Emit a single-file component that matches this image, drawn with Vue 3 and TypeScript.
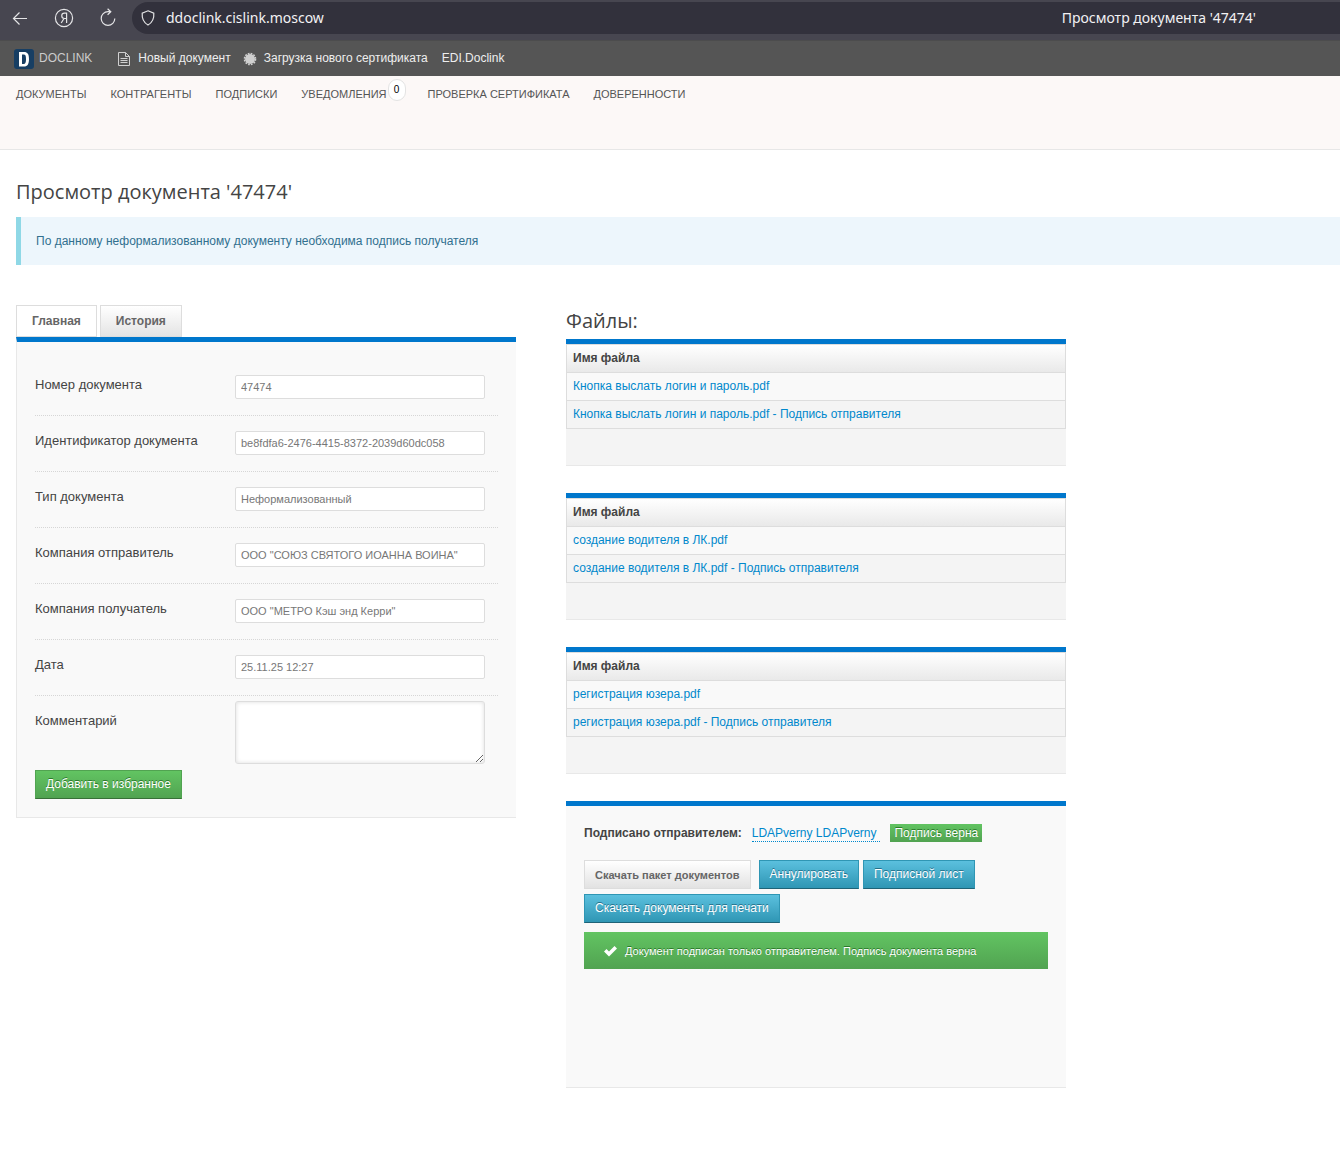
<script setup lang="ts">
import { ref } from 'vue'

interface Field {
  id: string
  label: string
  value: string
}

const title = "Просмотр документа '47474'"

const sections: { label: string; count?: number }[] = [
  { label: 'Документы' },
  { label: 'Контрагенты' },
  { label: 'Подписки' },
  { label: 'Уведомления', count: 0 },
  { label: 'Проверка сертификата' },
  { label: 'Доверенности' },
]

const fields: Field[] = [
  { id: 'number', label: 'Номер документа', value: '47474' },
  { id: 'uuid', label: 'Идентификатор документа', value: 'be8fdfa6-2476-4415-8372-2039d60dc058' },
  { id: 'type', label: 'Тип документа', value: 'Неформализованный' },
  { id: 'sender', label: 'Компания отправитель', value: 'ООО "СОЮЗ СВЯТОГО ИОАННА ВОИНА"' },
  { id: 'receiver', label: 'Компания получатель', value: 'ООО "МЕТРО Кэш энд Керри"' },
  { id: 'date', label: 'Дата', value: '25.11.25 12:27' },
]

const files: string[] = [
  'Кнопка выслать логин и пароль.pdf',
  'создание водителя в ЛК.pdf',
  'регистрация юзера.pdf',
]

const comment = ref('')
</script>

<template>
  <div class="page">
    <div class="browser">
      <div class="browser-buttons">
        <button type="button" aria-label="Назад">
          <svg width="20" height="20" viewBox="0 0 20 20"><path d="M17 10.500H3.500M9.500 4.500l-6 6 6 6" /></svg>
        </button>
        <button type="button" aria-label="Яндекс">
          <svg width="20" height="20" viewBox="0 0 20 20"><circle cx="10" cy="10" r="8.600" /><path d="M12.600 15V5.200h-2.200a2.600 2.600 0 0 0 0 5.300h2.200M10 10.500L7.200 15" /></svg>
        </button>
        <button type="button" aria-label="Обновить">
          <svg width="20" height="20" viewBox="0 0 20 20"><path d="M16.800 10.500a6.800 6.800 0 1 1-6.800-6.800h2.500M9.600 0.800l3.200 2.900-3.200 3" /></svg>
        </button>
      </div>
      <div class="address">
        <svg width="16" height="18" viewBox="0 0 16 18"><path d="M8 1.800l5.800 2.300c.4 4.800-.8 9-5.800 11.900C3 13.100 1.800 8.900 2.200 4.100z" /></svg>
        <span class="host">ddoclink.cislink.moscow</span>
        <span class="tab-title">{{ title }}</span>
      </div>
    </div>

    <header class="topbar">
      <a href="#" class="brand">
        <svg width="20" height="20" viewBox="0 0 20 20">
          <rect width="20" height="20" rx="3" fill="#173e63" />
          <path d="M5 3h5c3.500 0 5 2 5 7s-1.500 7.500-5 7.500H5zM8 5.500v9.500h1.500c1.700 0 2.500-1.200 2.500-5s-.8-4.500-2.500-4.500z" fill="#fff" fill-rule="evenodd" />
        </svg>
        <span>DOCLINK</span>
      </a>
      <a href="#" class="new-doc">
        <svg width="14" height="14" viewBox="0 0 14 14" fill="none" stroke="#d0d0d0">
          <path d="M1.500.5h7l4 4v9h-11zM8.500.5v4h4M3.500 6.500h7M3.500 8.500h7M3.500 10.500h7" />
        </svg>
        <span>Новый документ</span>
      </a>
      <a href="#" class="upload">
        <svg width="14" height="14" viewBox="0 0 14 14">
          <circle cx="7" cy="7" r="5" fill="#cfcfcf" />
          <circle cx="7" cy="7" r="5.500" fill="none" stroke="#cfcfcf" stroke-width="1.600" stroke-dasharray="1.730 1.150" />
        </svg>
        <span>Загрузка нового сертификата</span>
      </a>
      <a href="#" class="edi">EDI.Doclink</a>
    </header>

    <nav class="sections">
      <a v-for="s in sections" :key="s.label" href="#">
        {{ s.label }}<span v-if="s.count !== undefined" class="count">{{ s.count }}</span>
      </a>
    </nav>

    <main>
      <h1>{{ title }}</h1>
      <p class="notice">По данному неформализованному документу необходима подпись получателя</p>

      <div class="columns">
        <section class="column">
          <div class="tabs">
            <button type="button" class="tab active">Главная</button>
            <button type="button" class="tab">История</button>
          </div>
          <form class="panel form" @submit.prevent>
            <div v-for="f in fields" :key="f.id" class="row">
              <label :for="f.id">{{ f.label }}</label>
              <input :id="f.id" type="text" :value="f.value" readonly />
            </div>
            <div class="row comment">
              <label for="comment">Комментарий</label>
              <textarea id="comment" v-model="comment"></textarea>
            </div>
            <button type="submit" class="btn green">Добавить в избранное</button>
          </form>
        </section>

        <section class="column">
          <h2>Файлы:</h2>
          <div v-for="file in files" :key="file" class="files">
            <table>
              <thead>
                <tr><th scope="col">Имя файла</th></tr>
              </thead>
              <tbody>
                <tr><td><a href="#">{{ file }}</a></td></tr>
                <tr><td><a href="#">{{ file }} - Подпись отправителя</a></td></tr>
              </tbody>
            </table>
          </div>

          <div class="panel signature">
            <div class="signer">
              <strong>Подписано отправителем:</strong>
              <a href="#">LDAPverny LDAPverny</a>
              <span class="valid">Подпись верна</span>
            </div>
            <div class="actions">
              <button type="button" class="btn plain">Скачать пакет документов</button>
              <button type="button" class="btn blue">Аннулировать</button>
              <button type="button" class="btn blue">Подписной лист</button>
              <button type="button" class="btn blue">Скачать документы для печати</button>
            </div>
            <div class="status">
              <svg width="14" height="12" viewBox="0 0 14 12"><path d="M0 6.500L2.500 4 5 6.500 10.500 1l2.500 2.500L5 11.500z" fill="#fff" /></svg>
              <span>Документ подписан только отправителем. Подпись документа верна</span>
            </div>
          </div>
        </section>
      </div>
    </main>
  </div>
</template>

<style>
body {
  margin: 0;
  background: #fff;
}
</style>

<style scoped>
.page {
  min-height: 100vh;
  color: #444;
  font: 12px/18px "Liberation Sans", Arial, sans-serif;
}
.page * {
  box-sizing: border-box;
}
a {
  color: #0088cc;
  text-decoration: none;
}
button {
  font-family: inherit;
  cursor: pointer;
}

/* Browser bar */
.browser {
  display: flex;
  height: 40px;
  padding: 2px 0 6px 10px;
  background: #474650;
}
.browser-buttons {
  display: flex;
  align-items: center;
  gap: 24px;
  width: 122px;
}
.browser-buttons button {
  display: flex;
  padding: 0;
  border: 0;
  background: none;
}
.browser svg {
  fill: none;
  stroke: #e4e4e6;
  stroke-width: 1.2;
}
.address {
  display: flex;
  flex: 1;
  align-items: center;
  padding: 0 84px 0 8px;
  border-radius: 16px 0 0 16px;
  background: #32313c;
  color: #f2f2f4;
  font: 14px/32px "Noto Sans", "Open Sans", sans-serif;
}
.host {
  margin-left: 10px;
}
.tab-title {
  margin-left: auto;
}

/* Product bar */
.topbar {
  display: flex;
  align-items: center;
  height: 36px;
  padding-left: 14px;
  border-top: 1px solid #4c4c4d;
  background: #555;
}
.topbar a {
  display: flex;
  align-items: center;
  color: #eee;
}
.topbar span,
.edi {
  padding-bottom: 2px;
}
.topbar .brand {
  gap: 5px;
  color: #ccc;
}
.new-doc {
  gap: 7px;
  margin-left: 25px;
}
.upload {
  gap: 7px;
  margin-left: 12px;
}
.edi {
  margin-left: 14px;
}

/* Section links */
.sections {
  display: flex;
  gap: 24px;
  height: 74px;
  padding: 9px 16px 0;
  border-bottom: 1px solid #e7e7e7;
  background: #fcf8f7;
}
.sections a {
  position: relative;
  color: #555;
  font-size: 11px;
  text-transform: uppercase;
}
.sections a:has(.count) {
  margin-right: 17px;
}
.count {
  position: absolute;
  left: 100%;
  top: -6px;
  width: 18px;
  margin-left: 1px;
  border: 1px solid #e3e3e3;
  border-radius: 9px;
  background: #fff;
  color: #000;
  font-size: 10px;
  line-height: 20px;
  text-align: center;
}

/* Content */
main {
  padding: 30px 0 0 16px;
}
h1,
h2 {
  margin: 0;
  color: #444;
  font: 20px/24px "Open Sans", "Noto Sans", sans-serif;
}
.notice {
  margin: 13px 0 40px;
  padding: 15px;
  border-left: 5px solid #8fd8e6;
  background: #edf6fc;
  color: #31708f;
}
.columns {
  display: flex;
  align-items: flex-start;
  gap: 50px;
}
.column {
  flex: 0 1 500px;
  min-width: 0;
}
.panel {
  border-top: 5px solid #0077cc;
  border-bottom: 1px solid #e8e8e8;
  background: #f9f9f9;
}

.tabs {
  display: flex;
  gap: 3px;
}
.tab {
  height: 32px;
  padding: 0 15px;
  border: 1px solid #ddd;
  background: linear-gradient(#fff, #e4e4e4);
  color: #666;
  font-size: 12px;
  font-weight: bold;
}
.tab.active {
  background: #fff;
}

.form {
  padding: 18px 18px 18px 18px;
  border-left: 1px solid #e8e8e8;
}
.form .row {
  display: flex;
  align-items: flex-start;
  height: 56px;
  border-bottom: 1px dotted #d6d6d6;
}
.row label {
  width: 200px;
  padding-top: 16px;
  font-size: 13px;
}
.row input,
.row textarea {
  width: 250px;
  border: 1px solid #ddd;
  border-radius: 2px;
  background: #fff;
  color: #777;
  font: 11px/16px "Liberation Sans", Arial, sans-serif;
}
.row input {
  height: 24px;
  margin-top: 15px;
  padding: 0 5px;
}
.row textarea {
  height: 63px;
  margin-top: 5px;
  border-radius: 3px;
  box-shadow: inset 0 0 4px #ddd;
}
.form .comment {
  height: 74px;
  border-bottom: 0;
}

.btn {
  height: 29px;
  padding: 0 10px 2px;
  border: 1px solid;
  font-size: 12px;
}
.green {
  border-color: #51a351 #51a351 #387038;
  background: linear-gradient(#62c462, #51a351);
  color: #fff;
  text-shadow: 0 -1px 0 #2c7a2c;
}
.blue {
  border-color: #2f96b4 #2f96b4 #1f6377;
  background: linear-gradient(#5bc0de, #2f96b4);
  color: #fff;
  text-shadow: 0 -1px 0 #25708a;
}
.plain {
  margin-right: 4px;
  padding-bottom: 0;
  border-color: #ddd;
  background: linear-gradient(#fff, #e2e2e2);
  color: #666;
  font-size: 11px;
  font-weight: bold;
}

/* File tables */
h2 {
  margin: 4px 0 6px;
}
.files {
  margin-bottom: 27px;
  padding-bottom: 36px;
  border-top: 5px solid #0077cc;
  border-bottom: 1px solid #e8e8e8;
  background: #f4f4f4;
}
table {
  width: 100%;
  border: 1px solid #ddd;
  border-bottom: 0;
  border-collapse: separate;
  border-spacing: 0;
}
th,
td {
  height: 28px;
  padding: 0 6px 2px;
  border-bottom: 1px solid #ddd;
  text-align: left;
}
th {
  background: linear-gradient(#fff, #e9e9e9);
}
tbody tr:first-child td {
  background: #f9f9f9;
}

/* Signature panel */
.signature {
  min-height: 287px;
  padding: 18px;
}
.signer {
  display: flex;
  align-items: center;
}
.signer a {
  margin: 0 10px;
  padding-right: 4px;
  border-bottom: 1px dotted #0088cc;
  line-height: 16px;
}
.valid {
  padding: 0 4px;
  background: linear-gradient(#62c462, #51a351);
  color: #fff;
  text-shadow: 0 -1px 0 #2c7a2c;
}
.actions {
  display: flex;
  flex-wrap: wrap;
  gap: 5px 4px;
  margin: 18px 0 9px;
}
.status {
  display: flex;
  align-items: center;
  gap: 7px;
  height: 37px;
  padding: 0 20px;
  background: linear-gradient(#62c462, #51a351);
  color: #fff;
  font-size: 11px;
  text-shadow: 0 -1px 0 #2c7a2c;
}
</style>
